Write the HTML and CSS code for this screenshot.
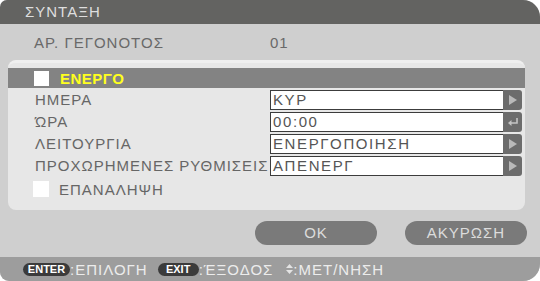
FILE: index.html
```html
<!DOCTYPE html>
<html>
<head>
<meta charset="utf-8">
<link rel="stylesheet" href="styles.css">
</head>
<body>
<div class="window">
  <div class="titlebar">ΣΥΝΤΑΞΗ</div>
  <div class="main">
    <div class="event">
      <span class="event-label">ΑΡ. ΓΕΓΟΝΟΤΟΣ</span>
      <span class="event-value">01</span>
    </div>
    <div class="panel">
      <div class="active">
        <span class="box"></span>
        <span class="active-text">ΕΝΕΡΓΟ</span>
      </div>
      <div class="row">
        <span class="label">ΗΜΕΡΑ</span>
        <div class="field"><span class="value">ΚΥΡ</span><span class="btn"><svg width="10" height="12" viewBox="0 0 10 12"><path d="M1 1 L9 6 L1 11 Z" fill="#b9b9b9"/></svg></span></div>
      </div>
      <div class="row">
        <span class="label">ΏΡΑ</span>
        <div class="field"><span class="value">00:00</span><span class="btn"><svg width="12" height="10" viewBox="0 0 12 10"><path d="M10 1 V6 H3" fill="none" stroke="#c4c4c4" stroke-width="1.6"/><path d="M1 6 L4.5 3 V9 Z" fill="#c4c4c4"/></svg></span></div>
      </div>
      <div class="row">
        <span class="label">ΛΕΙΤΟΥΡΓΙΑ</span>
        <div class="field"><span class="value">ΕΝΕΡΓΟΠΟΙΗΣΗ</span><span class="btn"><svg width="10" height="12" viewBox="0 0 10 12"><path d="M1 1 L9 6 L1 11 Z" fill="#b9b9b9"/></svg></span></div>
      </div>
      <div class="row">
        <span class="label">ΠΡΟΧΩΡΗΜΕΝΕΣ ΡΥΘΜΙΣΕΙΣ</span>
        <div class="field"><span class="value">ΑΠΕΝΕΡΓ</span><span class="btn"><svg width="10" height="12" viewBox="0 0 10 12"><path d="M1 1 L9 6 L1 11 Z" fill="#b9b9b9"/></svg></span></div>
      </div>
      <div class="repeat">
        <span class="box box-small"></span>
        <span class="label">ΕΠΑΝΑΛΗΨΗ</span>
      </div>
    </div>
    <div class="actions">
      <span class="pill">OK</span>
      <span class="pill">ΑΚΥΡΩΣΗ</span>
    </div>
  </div>
  <div class="footer">
    <span class="key key-enter">ENTER</span><span class="hint">:ΕΠΙΛΟΓΗ</span>
    <span class="key key-exit">EXIT</span><span class="hint">:ΈΞΟΔΟΣ</span>
    <svg class="updown" width="7" height="10" viewBox="0 0 7 10"><path d="M3.5 0 L7 4 H0 Z M0 6 H7 L3.5 10 Z" fill="#e4e4e4"/></svg><span class="hint">:ΜΕΤ/ΝΗΣΗ</span>
  </div>
</div>
</body>
</html>
```

FILE: styles.css
```css
html, body {
  margin: 0;
  padding: 0;
  background: #ffffff;
}
body {
  font-family: "Liberation Sans", Arial, sans-serif;
  font-size: 15px;
  letter-spacing: 1px;
}
.window {
  width: 540px;
  height: 281px;
  display: flex;
  flex-direction: column;
  border-radius: 7px 17px 17px 9px;
  overflow: hidden;
  background: #cfcfcf;
}
.titlebar {
  height: 24px;
  flex: none;
  background: #636361;
  color: #dedede;
  padding-left: 25px;
  line-height: 24px;
}
.main {
  flex: 1;
  display: flex;
  flex-direction: column;
}
.event {
  height: 36px;
  display: flex;
  align-items: center;
  color: #696969;
  box-sizing: border-box;
}
.event-label {
  width: 236px;
  padding-left: 34px;
}
.panel {
  margin: 0 15px 0 8px;
  height: 150px;
  box-sizing: border-box;
  background: #e7e7e7;
  border-top: 3px solid #efefef;
  border-radius: 8px;
  padding-top: 5px;
  display: flex;
  flex-direction: column;
}
.active {
  height: 20px;
  background: #838383;
  display: flex;
  align-items: center;
  padding-left: 26px;
  margin-bottom: 2px;
}
.box {
  width: 15px;
  height: 15px;
  background: #ffffff;
  flex: none;
}
.active-text {
  color: #ffff1e;
  font-weight: bold;
  margin-left: 11px;
  letter-spacing: 0.5px;
}
.row {
  height: 22px;
  display: flex;
  align-items: flex-start;
}
.label {
  color: #666666;
  white-space: nowrap;
}
.row .label {
  width: 235px;
  padding-left: 27px;
  line-height: 20px;
  flex: none;
}
.field {
  display: flex;
  height: 20px;
  width: 252px;
}
.value {
  flex: 1;
  background: #ffffff;
  border: 1px solid #3c3c3c;
  border-right: none;
  color: #555555;
  line-height: 18px;
  padding-left: 2px;
  letter-spacing: 1.6px;
}
.btn {
  width: 19px;
  flex: none;
  background: #6c6c6c;
  border-radius: 0 3px 3px 0;
  display: flex;
  align-items: center;
  justify-content: center;
}
.repeat {
  display: flex;
  align-items: center;
  padding-left: 25px;
  height: 20px;
  margin-top: 1px;
}
.box-small {
  width: 16px;
  height: 16px;
  margin-right: 10px;
}
.actions {
  display: flex;
  justify-content: flex-end;
  gap: 28px;
  padding-right: 13px;
  margin-top: 11px;
}
.pill {
  width: 122px;
  height: 24px;
  border-radius: 12px;
  background: #7a7a7a;
  color: #dcdcdc;
  text-align: center;
  line-height: 24px;
}
.footer {
  height: 24px;
  flex: none;
  background: #9d9d9d;
  display: flex;
  align-items: center;
  padding-left: 23px;
  color: #ececec;
}
.key {
  height: 13px;
  border-radius: 7px;
  background: #3b3b3b;
  color: #ffffff;
  font-weight: bold;
  font-size: 11px;
  letter-spacing: 0;
  line-height: 13px;
  text-align: center;
  flex: none;
}
.key-enter {
  width: 47px;
}
.key-exit {
  width: 41px;
  margin-left: 10px;
}
.updown {
  margin-left: 13px;
}
.hint {
  letter-spacing: 1px;
}
```
